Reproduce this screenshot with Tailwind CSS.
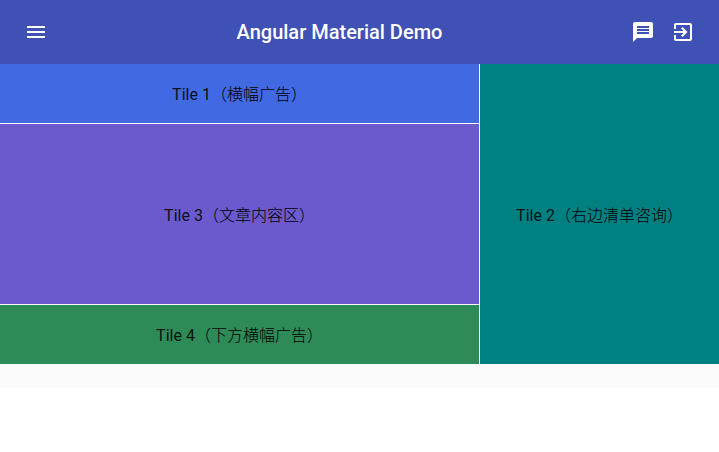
<!DOCTYPE html>
<html lang="zh">
<head>
<meta charset="utf-8">
<title>Angular Material Demo</title>
<script src="https://cdn.jsdelivr.net/npm/@tailwindcss/browser@4"></script>
</head>
<body class="bg-white font-[Roboto,'Noto_Sans_CJK_SC',sans-serif] text-black/87 overflow-hidden">
<div class="bg-[#fafafa] h-[388px]">
  <header class="h-16 bg-[#3f51b5] text-white flex items-center px-6">
    <button aria-label="menu"><svg class="size-6" viewBox="0 0 24 24" fill="currentColor"><path d="M3 18h18v-2H3v2zm0-5h18v-2H3v2zm0-7v2h18V6H3z"/></svg></button>
    <h1 class="flex-1 text-center text-xl font-medium">Angular Material Demo</h1>
    <div class="flex gap-4">
      <svg class="size-6" viewBox="0 0 24 24" fill="currentColor"><path d="M20 2H4c-1.100 0-1.990.9-1.990 2L2 22l4-4h14c1.100 0 2-.9 2-2V4c0-1.100-.9-2-2-2zM18 14H6v-2h12v2zm0-3H6V9h12v2zm0-3H6V6h12v2z"/></svg>
      <svg class="size-6" viewBox="0 0 24 24" fill="currentColor"><path d="M10.090 15.590L11.500 17l5-5-5-5-1.410 1.410L12.670 11H3v2h9.670l-2.580 2.590zM19 3H5c-1.110 0-2 .9-2 2v4h2V5h14v14H5v-4H3v4c0 1.100.89 2 2 2h14c1.100 0 2-.9 2-2V5c0-1.100-.9-2-2-2z"/></svg>
    </div>
  </header>
  <main class="grid grid-cols-[479px_239px] grid-rows-[59px_180px_59px] gap-px text-base *:flex *:items-center *:justify-center *:pt-[3px]">
    <div class="bg-[#4169e1]">Tile 1<span class="font-light text-black">（横幅广告）</span></div>
    <div class="bg-[#008080] row-span-3">Tile 2<span class="font-light text-black">（右边清单咨询）</span></div>
    <div class="bg-[#6a5acd]">Tile 3<span class="font-light text-black">（文章内容区）</span></div>
    <div class="bg-[#2e8b57]">Tile 4<span class="font-light text-black">（下方横幅广告）</span></div>
  </main>
</div>
</body>
</html>
